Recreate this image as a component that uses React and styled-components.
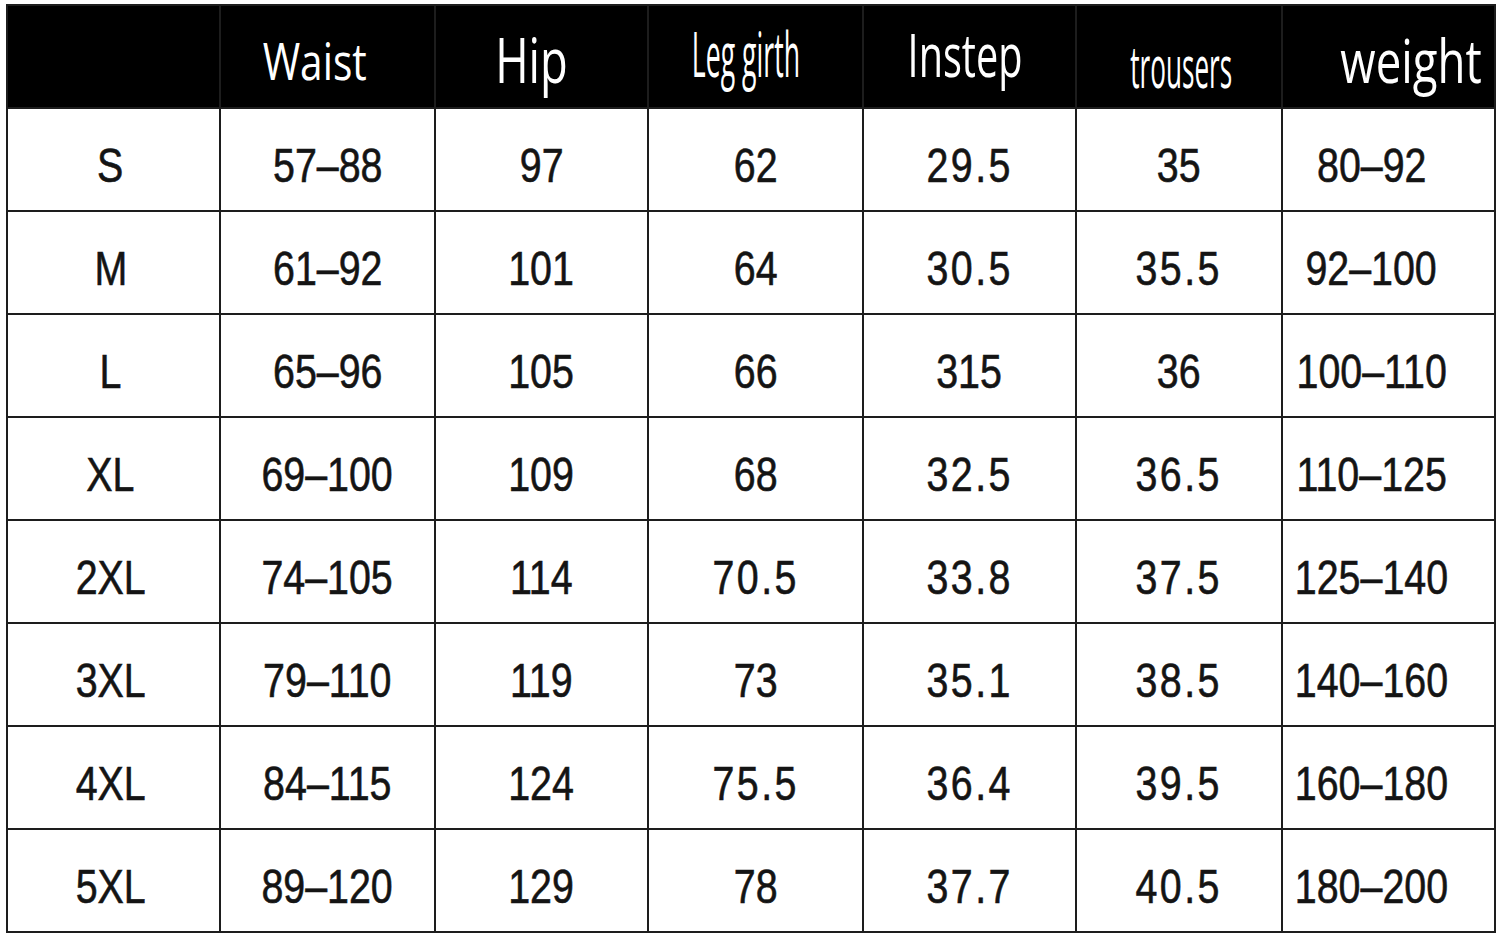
import React from "react";
import styled, { createGlobalStyle } from "styled-components";

const GlobalStyle = createGlobalStyle`
  html, body {
    margin: 0;
    padding: 0;
    background: #ffffff;
  }
`;

const Page = styled.div`
  width: 1500px;
  height: 938px;
  padding: 4px 0 0 6px;
  box-sizing: border-box;
  background: #ffffff;
`;

const Chart = styled.div`
  display: grid;
  grid-template-columns: 211px 213px 211px 213px 211px 204px 211px;
  grid-auto-rows: 101px;
  gap: 2px;
  padding: 2px;
  width: fit-content;
  background: #1d1d1d;
`;

const HeadCell = styled.div`
  background: #000000;
  display: flex;
  align-items: center;
  justify-content: center;
  overflow: visible;
`;

const HeadLabel = styled.span`
  display: inline-block;
  white-space: nowrap;
  color: #ffffff;
  font-family: "Open Sans", "Noto Sans", sans-serif;
  font-weight: 400;
  line-height: 1;
  font-size: ${(p) => p.$size}px;
  transform: translate(${(p) => p.$dx}px, ${(p) => p.$dy}px) scaleX(${(p) => p.$sx});
`;

const Cell = styled.div`
  background: #ffffff;
  display: flex;
  align-items: center;
  justify-content: center;
  padding-top: 12px;
  padding-right: ${(p) => (p.$shift ? 34 : 0)}px;
  box-sizing: border-box;
`;

const Value = styled.span`
  display: inline-block;
  white-space: nowrap;
  color: #141414;
  font-family: "Liberation Sans", Arial, sans-serif;
  font-size: 48px;
  line-height: 1;
  -webkit-text-stroke: 0.6px #141414;
  letter-spacing: ${(p) => (p.$spaced ? 3 : 0)}px;
  transform: translateX(${(p) => p.$dx || 0}px) scaleX(0.82);
`;

const headings = [
  { text: "", size: 52, sx: 1, dx: 0, dy: 0 },
  { text: "Waist", size: 52, sx: 0.78, dx: -13, dy: 3 },
  { text: "Hip", size: 63, sx: 0.72, dx: -10, dy: 2 },
  { text: "Leg girth", size: 62, sx: 0.43, dx: -10, dy: -4 },
  { text: "Instep", size: 60, sx: 0.66, dx: -5, dy: -3 },
  { text: "trousers", size: 58, sx: 0.45, dx: 2, dy: 9 },
  { text: "weight", size: 60, sx: 0.76, dx: 23, dy: 3 },
];

const sizes = [
  ["S", "57–88", "97", "62", "29.5", "35", "80–92"],
  ["M", "61–92", "101", "64", "30.5", "35.5", "92–100"],
  ["L", "65–96", "105", "66", "315", "36", "100–110"],
  ["XL", "69–100", "109", "68", "32.5", "36.5", "110–125"],
  ["2XL", "74–105", "114", "70.5", "33.8", "37.5", "125–140"],
  ["3XL", "79–110", "119", "73", "35.1", "38.5", "140–160"],
  ["4XL", "84–115", "124", "75.5", "36.4", "39.5", "160–180"],
  ["5XL", "89–120", "129", "78", "37.7", "40.5", "180–200"],
];

const App = () => {
  return (
    <>
      <GlobalStyle />
      <Page>
        <Chart>
          {headings.map((h, i) => (
            <HeadCell key={"h" + i}>
              <HeadLabel $size={h.size} $sx={h.sx} $dx={h.dx} $dy={h.dy}>
                {h.text}
              </HeadLabel>
            </HeadCell>
          ))}
          {sizes.map((row) =>
            row.map((v, i) => (
              <Cell key={row[0] + i} $shift={i === 6}>
                <Value $spaced={v.includes(".")} $dx={i === 0 ? -3 : 0}>
                  {v}
                </Value>
              </Cell>
            ))
          )}
        </Chart>
      </Page>
    </>
  );
};

export default App;
